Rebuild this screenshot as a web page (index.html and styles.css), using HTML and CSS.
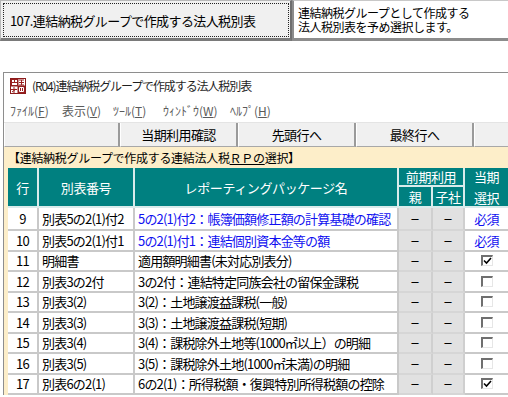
FILE: index.html
```html
<!DOCTYPE html>
<html lang="ja">
<head>
<meta charset="utf-8">
<link rel="stylesheet" href="styles.css">
</head>
<body>
<div class="top">
  <div class="main-btn"><div class="focus">107.連結納税グループで作成する法人税別表</div></div>
  <div class="desc"><div class="line">連結納税グループとして作成する</div><div class="line">法人税別表を予め選択します。</div></div>
</div>
<div class="window">
  <div class="titlebar">
    <svg class="app-icon" width="16" height="16" viewBox="0 0 16 16">
      <rect x="0.5" y="0.5" width="15" height="15" fill="#fff" stroke="#8b1c1c"/>
      <rect x="1" y="1" width="7" height="7" fill="#9a1f1f"/>
      <rect x="2" y="2" width="2" height="2" fill="#fff"/>
      <rect x="5" y="2" width="2" height="2" fill="#fff"/>
      <rect x="2" y="5" width="5" height="2" fill="#fff"/>
      <rect x="8" y="1" width="7" height="7" fill="#fff"/>
      <path d="M9 2h5M11.5 2v5M9 4.5h5M9 7h5" stroke="#9a1f1f" stroke-width="1"/>
      <path d="M1 11.5h6M4 9v6M2 14l4-3" stroke="#9a1f1f" stroke-width="1"/>
      <rect x="8" y="8" width="7" height="7" fill="#9a1f1f"/>
      <path d="M9.5 9.5h4v4h-4zM11.5 9.5v4" stroke="#fff" stroke-width="1" fill="none"/>
      <path d="M0.5 8h15M8 0.5v15" stroke="#8b1c1c" stroke-width="1"/>
    </svg>
    <span class="title">(R04)連結納税グループで作成する法人税別表</span>
  </div>
  <div class="menubar">
    <span class="menu m1">ﾌｧｲﾙ(<u>F</u>)</span>
    <span class="menu m2">表示(<u>V</u>)</span>
    <span class="menu m3">ﾂｰﾙ(<u>T</u>)</span>
    <span class="menu m4">ｳｨﾝﾄﾞｳ(<u>W</u>)</span>
    <span class="menu m5">ﾍﾙﾌﾟ(<u>H</u>)</span>
  </div>
  <div class="toolbar">
    <div class="tbtn first"></div>
    <div class="tbtn">当期利用確認</div>
    <div class="tbtn">先頭行へ</div>
    <div class="tbtn">最終行へ</div>
    <div class="tbtn last"></div>
  </div>
  <div class="panel">
    <div class="caption">【連結納税グループで作成する連結法人税<u>ＲＰの</u>選択】</div>
    <div class="grid">
      <div class="h tall">行</div>
      <div class="h tall">別表番号</div>
      <div class="h tall">レポーティングパッケージ名</div>
      <div class="h wide">前期利用</div>
      <div class="h tall two">当期<br>選択</div>
      <div class="h">親</div>
      <div class="h">子社</div>

      <div class="c num">9</div>
      <div class="c">別表5の2(1)付2</div>
      <div class="c blue">5の2(1)付2：帳簿価額修正額の計算基礎の確認</div>
      <div class="c gray">－</div>
      <div class="c gray">－</div>
      <div class="c sel blue">必須</div>

      <div class="c num">10</div>
      <div class="c">別表5の2(1)付1</div>
      <div class="c blue">5の2(1)付1：連結個別資本金等の額</div>
      <div class="c gray">－</div>
      <div class="c gray">－</div>
      <div class="c sel blue">必須</div>

      <div class="c num">11</div>
      <div class="c">明細書</div>
      <div class="c">適用額明細書(未対応別表分)</div>
      <div class="c gray">－</div>
      <div class="c gray">－</div>
      <div class="c sel"><span class="chk"><svg width="9" height="8" viewBox="0 0 9 8"><path d="M1 3.5l2.5 2.5L8 1" stroke="#000" stroke-width="1.6" fill="none"/></svg></span></div>

      <div class="c num">12</div>
      <div class="c">別表3の2付</div>
      <div class="c">3の2付：連結特定同族会社の留保金課税</div>
      <div class="c gray">－</div>
      <div class="c gray">－</div>
      <div class="c sel"><span class="chk"></span></div>

      <div class="c num">13</div>
      <div class="c">別表3(2)</div>
      <div class="c">3(2)：土地譲渡益課税(一般)</div>
      <div class="c gray">－</div>
      <div class="c gray">－</div>
      <div class="c sel"><span class="chk"></span></div>

      <div class="c num">14</div>
      <div class="c">別表3(3)</div>
      <div class="c">3(3)：土地譲渡益課税(短期)</div>
      <div class="c gray">－</div>
      <div class="c gray">－</div>
      <div class="c sel"><span class="chk"></span></div>

      <div class="c num">15</div>
      <div class="c">別表3(4)</div>
      <div class="c">3(4)：課税除外土地等(1000㎡以上）の明細</div>
      <div class="c gray">－</div>
      <div class="c gray">－</div>
      <div class="c sel"><span class="chk"></span></div>

      <div class="c num">16</div>
      <div class="c">別表3(5)</div>
      <div class="c">3(5)：課税除外土地(1000㎡未満)の明細</div>
      <div class="c gray">－</div>
      <div class="c gray">－</div>
      <div class="c sel"><span class="chk"></span></div>

      <div class="c num">17</div>
      <div class="c">別表6の2(1)</div>
      <div class="c">6の2(1)：所得税額・復興特別所得税額の控除</div>
      <div class="c gray">－</div>
      <div class="c gray">－</div>
      <div class="c sel"><span class="chk"><svg width="9" height="8" viewBox="0 0 9 8"><path d="M1 3.5l2.5 2.5L8 1" stroke="#000" stroke-width="1.6" fill="none"/></svg></span></div>
    </div>
  </div>
</div>
</body>
</html>
```

FILE: styles.css
```css
html, body {
  margin: 0;
  padding: 0;
}
body {
  width: 508px;
  height: 397px;
  overflow: hidden;
  background: #fff;
  color: #000;
  font-family: "Noto Sans CJK JP", "Noto Sans", sans-serif;
  font-size: 12px;
}

/* top strip */
.top {
  display: flex;
  height: 41px;
}
.main-btn {
  width: 292px;
  box-sizing: border-box;
  background: #f0f0f0;
  border-top: 1px solid #b8b8b8;
  border-left: 1px solid #b8b8b8;
  border-right: 2px solid #6e6e6e;
  border-bottom: 3px solid #7a7a7a;
  padding: 2px 1px 1px 2px;
}
.focus {
  height: 100%;
  box-sizing: border-box;
  border: 1px dotted #222;
  display: flex;
  align-items: center;
  padding-left: 6px;
  font-size: 13px;
  letter-spacing: -0.6px;
}
.desc {
  flex: 1;
  box-sizing: border-box;
  border-left: 2px solid #8c8c8c;
  border-top: 1px solid #c8c8c8;
  border-bottom: 3px solid #8c8c8c;
  padding: 5px 0 0 4px;
  font-size: 12px;
  letter-spacing: -0.5px;
}
.line {
  height: 14px;
  line-height: 14px;
  white-space: nowrap;
}

/* window */
.window {
  margin-top: 31px;
  margin-left: 3px;
  border-top: 1px solid #8e8e8e;
  border-left: 1px solid #8e8e8e;
}
.titlebar {
  height: 25px;
  display: flex;
  align-items: center;
  padding-left: 6px;
}
.app-icon {
  flex: none;
  margin-right: 6px;
}
.title {
  font-size: 12px;
  color: #1f1f1f;
  letter-spacing: -1.1px;
}
.menubar {
  height: 24px;
  box-sizing: border-box;
  padding: 6px 0 0 6px;
  display: flex;
  font-size: 12px;
  line-height: 14px;
  color: #5a5a5a;
}
.menu u {
  text-decoration-thickness: 1px;
}
.m1 { width: 52px; }
.m2 { width: 51px; }
.m3 { width: 50px; }
.m4 { width: 67px; }

.toolbar {
  display: flex;
  height: 25px;
  box-sizing: border-box;
  border-top: 1px solid #e4e4e4;
  background: #f0f0f0;
}
.tbtn {
  flex: none;
  width: 118px;
  box-sizing: border-box;
  border-left: 1px solid #fff;
  border-right: 2px solid #9a9a9a;
  border-bottom: 1px solid #a8a8a8;
  display: flex;
  align-items: center;
  justify-content: center;
  font-size: 13px;
  letter-spacing: -0.6px;
}
.tbtn.first { width: 116px; }
.tbtn.last { width: 40px; }

/* panel */
.panel {
  background: #fdeec9;
  padding-left: 4px;
}
.caption {
  height: 21px;
  display: flex;
  align-items: center;
  padding-left: 0;
  font-size: 12px;
  letter-spacing: -0.3px;
}
.caption u {
  text-decoration-thickness: 1px;
}

.grid {
  display: grid;
  grid-template-columns: 31px 96px 264px 34px 32px 45px;
  grid-template-rows: 19px 21px 23px repeat(8, 20.5px);
}
.h {
  box-sizing: border-box;
  background: #008080;
  color: #fff;
  border-right: 2px solid #d9ebeb;
  border-bottom: 2px solid #d9ebeb;
  display: flex;
  align-items: center;
  justify-content: center;
  font-size: 13px;
  letter-spacing: -0.4px;
}
.h.tall { grid-row: span 2; }
.h.wide { grid-column: span 2; }
.h.two {
  line-height: 21px;
  text-align: center;
}

.c {
  box-sizing: border-box;
  background: #fff;
  border-right: 2px solid #c9c9c9;
  border-bottom: 2px solid #c9c9c9;
  display: flex;
  align-items: center;
  padding-left: 3px;
  font-size: 13px;
  letter-spacing: -0.8px;
  white-space: nowrap;
  overflow: hidden;
}
.c.num {
  justify-content: center;
  padding-left: 0;
}
.c.gray {
  background: #e1e1e1;
  border-right-color: #cfcfcf;
  border-bottom-color: #d6d6d6;
  justify-content: center;
  padding-left: 0;
  font-size: 10px;
  font-weight: bold;
  letter-spacing: 0;
  color: #000;
}
.c.sel {
  justify-content: center;
  padding-left: 0;
}
.blue {
  color: #1010f0;
}

.chk {
  display: flex;
  align-items: center;
  justify-content: center;
  width: 12px;
  height: 11px;
  box-sizing: border-box;
  border-top: 2px solid #6f6f6f;
  border-left: 2px solid #6f6f6f;
  border-right: 1px solid #e6e6e6;
  border-bottom: 1px solid #e6e6e6;
  background: #fff;
}
```
